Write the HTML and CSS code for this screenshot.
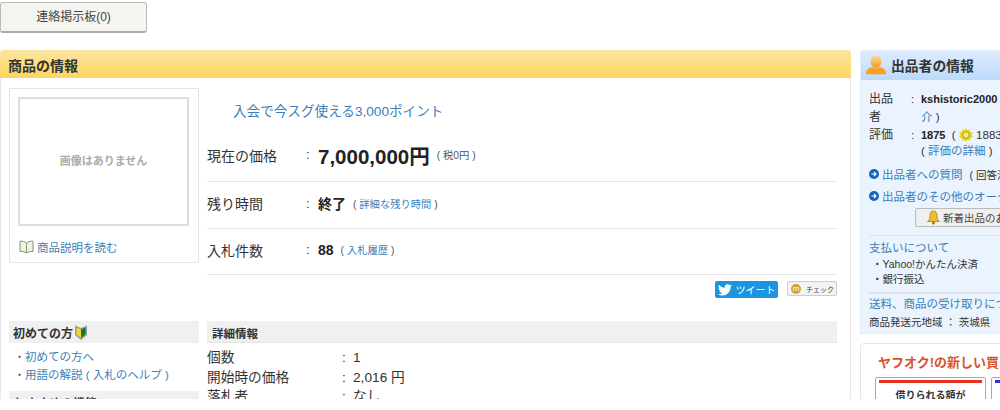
FILE: index.html
```html
<!DOCTYPE html>
<html lang="ja">
<head>
<meta charset="UTF-8" />
<title>商品の情報</title>
<link rel="stylesheet" href="styles.css">
</head>
<body>
<div class="page">

<a class="board-btn">連絡掲示板(0)</a>

<div class="columns">
  <div class="main">
    <h2 class="main-head">商品の情報</h2>
    <div class="main-body">
      <div class="top-row">
        <div class="photo-box">
          <div class="photo">画像はありません</div>
          <div class="read-more">
            <svg width="15" height="14" viewBox="0 0 15 14"><path d="M7.500 3C6 1.600 3.500 1 1 1.200V11.500C3.500 11.300 6 11.800 7.500 13C9 11.800 11.500 11.300 14 11.500V1.200C11.500 1 9 1.600 7.500 3Z" fill="#eef1e4" stroke="#7f9a6c"/><path d="M7.500 3V13" stroke="#7f9a6c"/></svg>
            <a>商品説明を読む</a>
          </div>
        </div>
        <div class="summary">
          <a class="point-link">入会で今スグ使える3,000ポイント</a>
          <div class="sum-row sum-price">
            <span class="sum-label">現在の価格</span><span class="colon">:</span>
            <b class="price">7,000,000円</b><span class="note">( 税0円 )</span>
          </div>
          <div class="sum-row sum-time">
            <span class="sum-label">残り時間</span><span class="colon">:</span>
            <b class="strong">終了</b><span class="note">( <a>詳細な残り時間</a> )</span>
          </div>
          <div class="sum-row">
            <span class="sum-label">入札件数</span><span class="colon">:</span>
            <b class="strong">88</b><span class="note">( <a>入札履歴</a> )</span>
          </div>
          <div class="share">
            <span class="tweet">
              <svg width="14" height="12" viewBox="0 0 24 20"><path fill="#fff" d="M24 2.400c-.9.400-1.800.7-2.800.8 1-.6 1.800-1.600 2.200-2.700-1 .6-2 1-3.100 1.200A4.900 4.900 0 0 0 11.900 6.200C7.800 6 4.200 4 1.700.9c-1.300 2.200-.7 5.100 1.500 6.600-.8 0-1.600-.2-2.200-.6 0 2.300 1.600 4.400 3.900 4.900-.7.200-1.500.2-2.200.1.600 2 2.400 3.400 4.600 3.400A9.900 9.900 0 0 1 0 17.300 14 14 0 0 0 7.500 19.500c9.100 0 14.300-7.700 14-14.600 1-.7 1.800-1.600 2.500-2.500Z"/></svg>
              ツイート
            </span>
            <span class="mixi"><i class="mixi-mark">m</i>チェック</span>
          </div>
        </div>
      </div>
      <div class="bottom-row">
        <div class="side">
          <h3 class="side-head">初めての方
            <svg width="14" height="17" viewBox="0 0 14 17"><path d="M1 1.500L7 4L13 1.500V11L7 16L1 11Z" fill="#9a9a9a"/><path d="M2.500 3.500L7 5.500V14L2.500 10.300Z" fill="#f2dc1e"/><path d="M11.500 3.500L7 5.500V14L11.500 10.300Z" fill="#167a2c"/></svg>
          </h3>
          <ul class="side-list">
            <li><a>初めての方へ</a></li>
            <li><a>用語の解説 ( 入札のヘルプ )</a></li>
          </ul>
          <h3 class="side-head">おすすめの機能</h3>
        </div>
        <div class="detail">
          <h3 class="detail-head">詳細情報</h3>
          <div class="detail-row"><span class="detail-label">個数</span><span class="colon2">:</span><span>1</span></div>
          <div class="detail-row"><span class="detail-label">開始時の価格</span><span class="colon2">:</span><span>2,016 円</span></div>
          <div class="detail-row"><span class="detail-label">落札者</span><span class="colon2">:</span><span>なし</span></div>
        </div>
      </div>
    </div>
  </div>

  <div class="aside">
    <div class="seller">
      <h2 class="seller-head">
        <svg width="22" height="22" viewBox="0 0 26 24"><defs><linearGradient id="usr" x1="0" y1="0" x2="0" y2="1"><stop offset="0" stop-color="#fbd9a6"/><stop offset="1" stop-color="#f59a1a"/></linearGradient></defs><ellipse cx="13" cy="8" rx="6.500" ry="7.500" fill="url(#usr)"/><path d="M1 23C1 17 6 15 9 14.500C11 16.500 15 16.500 17 14.500C20 15 25 17 25 23Z" fill="#f7a11f"/></svg>
        出品者の情報
      </h2>
      <div class="seller-body">
        <div class="info-row"><span class="info-label">出品者</span><span class="info-colon">:</span><span class="info-val"><b>kshistoric2000</b><br><a>介</a> )</span></div>
        <div class="info-row"><span class="info-label">評価</span><span class="info-colon">:</span><span class="info-val"><b>1875</b> &nbsp;(
          <svg class="sun" width="14" height="14" viewBox="0 0 14 14"><path d="M7 0L8.500 2.200L11 1.300L11.200 3.900L13.800 4.300L12.700 6.800L14 9L11.500 10L11 12.700L8.500 12L7 14L5.300 12L3 12.700L2.500 10L0 9L1.300 6.800L.2 4.300L2.800 3.900L3 1.300L5.500 2.200Z" fill="#e8d42a"/><circle cx="7" cy="7" r="3.300" fill="#f8ee7a" stroke="#a8960f"/></svg> 1883<span class="info-sub">( <a>評価の詳細</a> )</span></span></div>
        <p class="arrow-link">
          <svg width="10" height="10" viewBox="0 0 10 10"><circle cx="5" cy="5" r="5" fill="#1464c0"/><path d="M2.500 5H7M5 3L7 5L5 7" fill="none" stroke="#fff" stroke-width="1.200"/></svg>
          <a>出品者への質問</a> <small>( 回答済</small></p>
        <p class="arrow-link">
          <svg width="10" height="10" viewBox="0 0 10 10"><circle cx="5" cy="5" r="5" fill="#1464c0"/><path d="M2.500 5H7M5 3L7 5L5 7" fill="none" stroke="#fff" stroke-width="1.200"/></svg>
          <a>出品者のその他のオークション</a></p>
        <span class="new-btn">
          <svg width="15" height="15" viewBox="0 0 15 15"><path d="M7.500 1C4.500 1 4 4 4 7C4 9 3 10 1.500 11.500H13.500C12 10 11 9 11 7C11 4 10.500 1 7.500 1Z" fill="#f2bd2c" stroke="#a87c10" stroke-width=".8"/><circle cx="7.500" cy="13" r="1.500" fill="#a87c10"/></svg>
          新着出品のお知らせ登録
        </span>
        <div class="pay">
          <a class="pay-title">支払いについて</a>
          <ul class="pay-list">
            <li>Yahoo!かんたん決済</li>
            <li>銀行振込</li>
          </ul>
        </div>
        <div class="ship">
          <a class="pay-title">送料、商品の受け取りについて</a>
          <p class="ship-from">商品発送元地域 ： 茨城県</p>
        </div>
      </div>
    </div>
    <div class="promo">
      <h3 class="promo-title">ヤフオク!の新しい買い方</h3>
      <div class="promo-cards">
        <div class="promo-card red">借りられる額が</div>
        <div class="promo-card blue"></div>
      </div>
    </div>
  </div>
</div>

</div>
</body>
</html>
```

FILE: styles.css
```css
html, body {
  margin: 0;
  padding: 0;
  background: #fff;
}
body {
  color: #333;
  font-family: "Liberation Sans", "Noto Sans CJK JP", sans-serif;
  font-size: 13px;
}
a {
  color: #3b7fb8;
}
.page {
  width: 1000px;
  height: 399px;
  overflow: hidden;
  padding-top: 2px;
  box-sizing: border-box;
}
.board-btn {
  display: block;
  width: 147px;
  height: 31px;
  box-sizing: border-box;
  line-height: 28px;
  text-align: center;
  font-size: 12px;
  color: #444;
  background: #f5f5f0;
  border: 1px solid #bbb;
  border-bottom: 2px solid #aaa;
  border-radius: 3px;
}
.columns {
  display: flex;
  align-items: flex-start;
  gap: 9px;
  margin-top: 17px;
  width: 1140px;
}
.main {
  width: 851px;
  flex: none;
  box-sizing: border-box;
  border: 1px solid #e8e8e8;
  border-width: 0 1px;
  border-radius: 4px 4px 0 0;
}
.main-head {
  margin: 0 -1px;
  height: 28px;
  padding-left: 8px;
  line-height: 33px;
  font-size: 14px;
  color: #333;
  background: linear-gradient(#fbe5a3, #fed65e);
  border-radius: 4px 4px 0 0;
}
.main-body {
  padding: 10px 13px 0 8px;
}
.top-row {
  display: flex;
  gap: 8px;
}
.photo-box {
  width: 190px;
  height: 175px;
  flex: none;
  box-sizing: border-box;
  border: 1px solid #e6e6e6;
  padding: 8px;
}
.photo {
  width: 171px;
  height: 129px;
  box-sizing: border-box;
  border: 2px solid #ddd;
  padding-bottom: 3px;
  display: flex;
  align-items: center;
  justify-content: center;
  color: #aaa;
  font-size: 11px;
  font-weight: bold;
}
.read-more {
  display: flex;
  align-items: center;
  gap: 3px;
  margin: 13px 0 0 1px;
  font-size: 11.500px;
}
.summary {
  flex: 1;
}
.point-link {
  display: block;
  height: 44px;
  padding: 12px 0 0 26px;
  box-sizing: border-box;
  font-size: 13.600px;
}
.sum-row {
  display: flex;
  align-items: center;
  height: 46px;
  padding-bottom: 4px;
  box-sizing: border-box;
  border-bottom: 1px solid #e6e6e6;
  font-size: 14px;
}
.sum-price {
  height: 50px;
}
.sum-time {
  height: 47px;
}
.sum-label {
  width: 96px;
}
.colon {
  width: 15px;
  box-sizing: border-box;
  padding-left: 3px;
  font-size: 13px;
}
.price {
  font-size: 20.500px;
  color: #222;
}
.strong {
  font-size: 14px;
  color: #222;
}
.note {
  font-size: 10.300px;
  margin-left: 7px;
  color: #555;
}
.share {
  display: flex;
  justify-content: flex-end;
  align-items: flex-start;
  gap: 9px;
  padding-top: 6px;
}
.tweet {
  display: flex;
  align-items: center;
  justify-content: center;
  gap: 4px;
  width: 63px;
  height: 17px;
  background: #1b95e0;
  color: #fff;
  border-radius: 2px;
  font-size: 10px;
}
.mixi {
  display: flex;
  align-items: center;
  gap: 5px;
  width: 50px;
  height: 15px;
  box-sizing: border-box;
  padding-left: 3px;
  background: #f4f4f4;
  border: 1px solid #ccc;
  border-radius: 2px;
  font-size: 7px;
  white-space: nowrap;
  color: #444;
}
.mixi-mark {
  flex: none;
  width: 10px;
  height: 10px;
  border-radius: 50%;
  background: #d1a338;
  color: #fff;
  font-style: normal;
  font-size: 8px;
  line-height: 9px;
  text-align: center;
}
.bottom-row {
  display: flex;
  gap: 8px;
  margin-top: 23px;
}
.side {
  width: 190px;
  flex: none;
}
.side-head {
  display: flex;
  align-items: center;
  gap: 1px;
  height: 22px;
  margin: 0;
  padding-left: 4px;
  background: #f0f0f0;
  font-size: 12px;
  color: #333;
}
.side-list {
  list-style: none;
  margin: 0;
  padding: 5px 0 7px 5px;
  font-size: 11.500px;
  line-height: 18px;
}
.side-list li::before {
  content: "・";
  font-size: 11px;
  color: #555;
}
.detail {
  flex: 1;
}
.detail-head {
  height: 22px;
  margin: 0;
  padding-left: 5px;
  line-height: 26px;
  background: #f0f0f0;
  border-bottom: 1px solid #e6e6e6;
  box-sizing: border-box;
  font-size: 11.500px;
  color: #333;
}
.detail-row {
  display: flex;
  height: 19.500px;
  line-height: 19px;
  font-size: 13.700px;
}
.detail-head + .detail-row {
  margin-top: 5px;
}
.detail-label {
  width: 132px;
}
.colon2 {
  width: 14px;
  box-sizing: border-box;
  padding-left: 3px;
}
.aside {
  width: 270px;
  flex: none;
}
.seller {
  background: #eaf3fe;
  border-radius: 4px 4px 0 0;
  height: 284px;
  overflow: hidden;
  border: 1px solid #e3ecf7;
  border-top: 0;
  box-sizing: border-box;
}
.seller-head {
  display: flex;
  align-items: center;
  gap: 4px;
  height: 30px;
  margin: 0;
  padding-left: 4px;
  background: linear-gradient(#e0edfd, #bcd9fb);
  font-size: 13.800px;
  color: #333;
}
.seller-body {
  padding: 10px 0 0 8px;
  font-size: 11.500px;
}
.info-row {
  display: flex;
  line-height: 18px;
}
.info-label {
  width: 26px;
  flex: none;
  font-size: 12px;
}
.info-colon {
  width: 26px;
  flex: none;
  box-sizing: border-box;
  padding-left: 16px;
}
.info-val {
  white-space: nowrap;
}
.info-val b {
  font-size: 11px;
  color: #222;
}
.info-sub {
  display: block;
  margin-top: -2px;
}
.sun {
  vertical-align: -3px;
}
.arrow-link {
  display: flex;
  align-items: center;
  gap: 3px;
  height: 16px;
  margin: 6px 0 0;
  white-space: nowrap;
  font-size: 11.500px;
}
.arrow-link small {
  font-size: 10.500px;
  margin-left: 4px;
}
.new-btn {
  display: flex;
  align-items: center;
  gap: 2px;
  width: 170px;
  height: 19px;
  box-sizing: border-box;
  margin: 4px 0 0 46px;
  padding-left: 10px;
  background: #efefef;
  border: 1px solid #bbb;
  border-radius: 2px;
  font-size: 10.500px;
  white-space: nowrap;
  color: #444;
}
.pay {
  margin-top: 8px;
  padding-top: 4px;
  border-top: 1px solid #dde3ea;
}
.pay-title {
  display: block;
  font-size: 11.500px;
  line-height: 16px;
  white-space: nowrap;
}
.pay-list {
  list-style: none;
  margin: 1px 0 0;
  padding: 0 0 0 3px;
  font-size: 10.500px;
  line-height: 15px;
}
.pay-list li::before {
  content: "・";
}
.ship {
  margin-top: 5px;
  padding-top: 2px;
  border-top: 2px solid #dde3ea;
}
.ship-from {
  margin: 2px 0 0;
  line-height: 16px;
  font-size: 10.500px;
}
.promo {
  margin-top: 9px;
  height: 80px;
  border: 1px solid #e6e6e6;
  border-radius: 4px;
  padding: 8px 0 0 14px;
  box-sizing: border-box;
}
.promo-title {
  margin: 0 0 0 3px;
  font-size: 13px;
  color: #d9532c;
  white-space: nowrap;
}
.promo-cards {
  display: flex;
  gap: 5px;
  margin-top: 6px;
}
.promo-card {
  width: 111px;
  height: 40px;
  box-sizing: border-box;
  border: 1px solid #aaa;
  border-radius: 2px;
  padding: 6px 0 0;
  text-align: center;
  font-size: 10px;
  font-weight: bold;
}
.promo-card::before {
  content: "";
  display: block;
  height: 3px;
  margin: -4px 3px 4px;
}
.red::before {
  background: #e6331f;
}
.blue::before {
  background: #3333dd;
}
```
